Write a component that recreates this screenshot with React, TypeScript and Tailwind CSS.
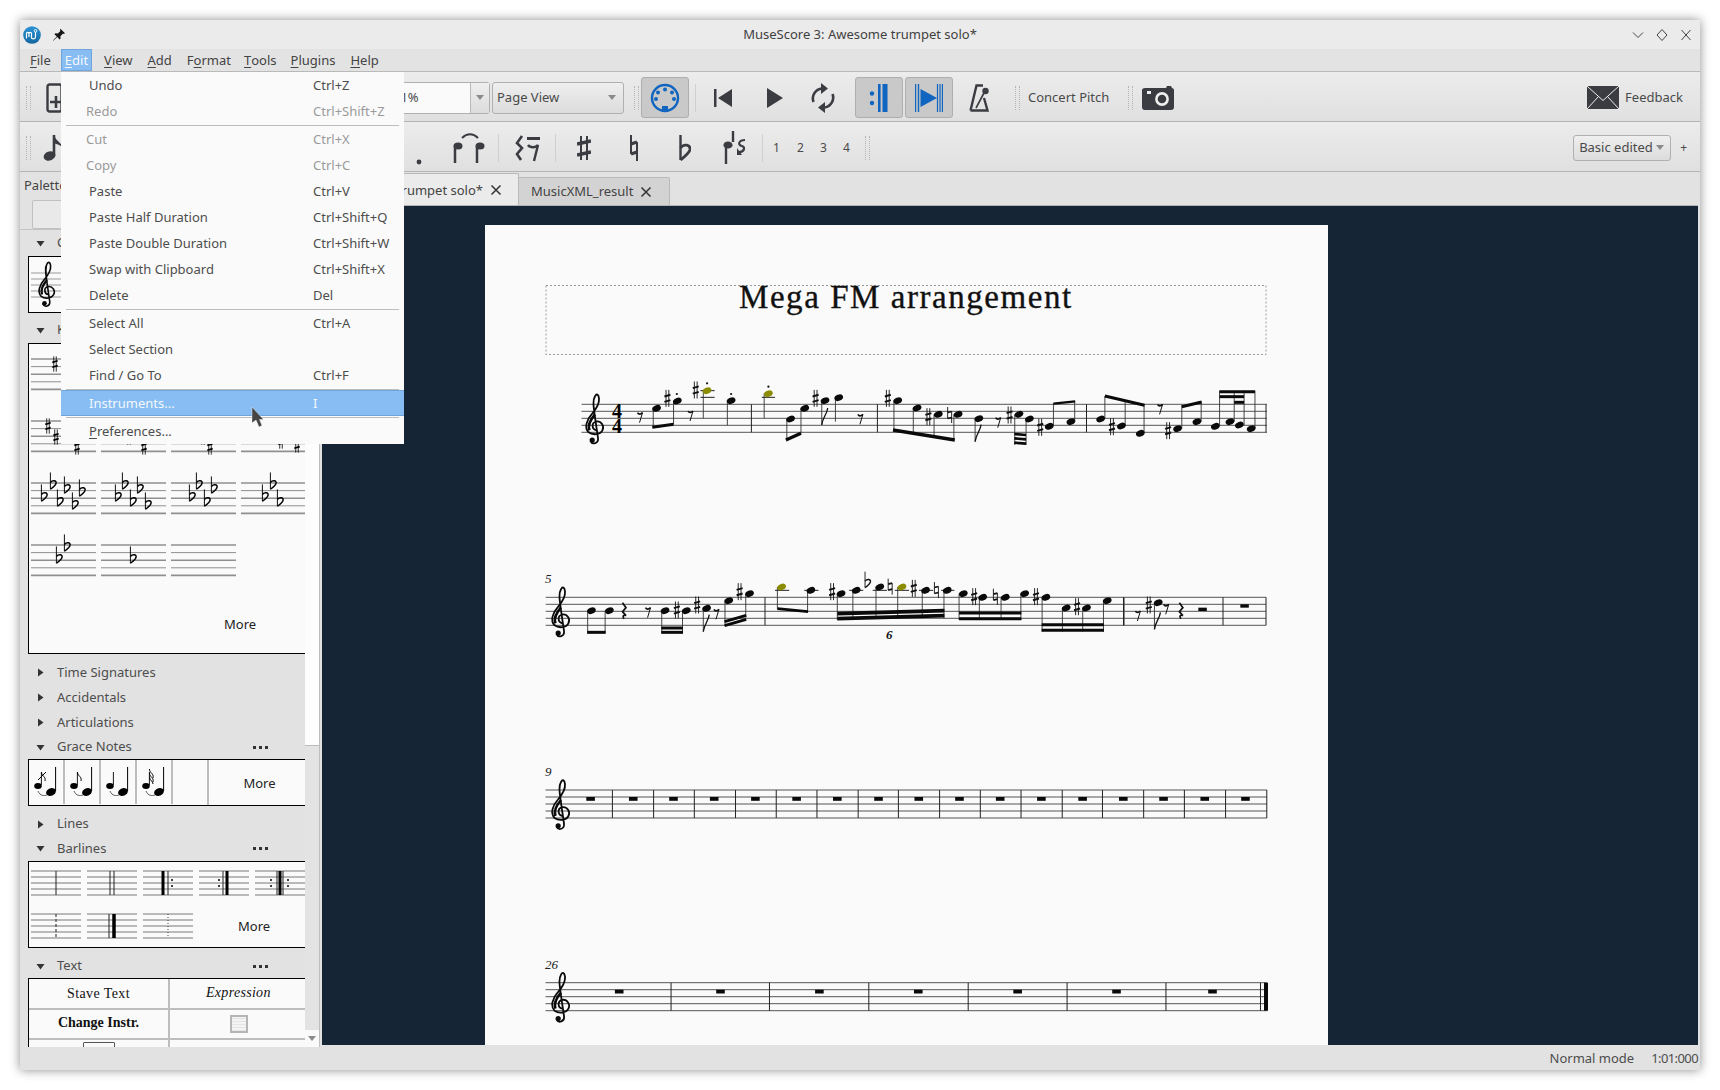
import React from "react";

const INK = "#3a3c42";
const BLUE = "#0f65c0";

const Sharp = ({ x, y, s = 1, c = "#111" }: { x: number; y: number; s?: number; c?: string }) => (
  <g transform={`translate(${x} ${y}) scale(${s})`} stroke={c} fill="none">
    <path d="M-1.4 -8.5V8.5M1.4 -8.5V8.5" strokeWidth="0.9" />
    <path d="M-3 -1.8L3 -3.6M-3 3.6L3 1.8" strokeWidth="1.9" />
  </g>
);
const Natural = ({ x, y, s = 1, c = "#111" }: { x: number; y: number; s?: number; c?: string }) => (
  <g transform={`translate(${x} ${y}) scale(${s})`} stroke={c} fill="none">
    <path d="M-2 -8V3.5M2 -3.5V8" strokeWidth="0.9" />
    <path d="M-2 -2.5L2 -3.5M-2 3.5L2 2.5" strokeWidth="1.8" />
  </g>
);
const Flat = ({ x, y, s = 1, c = "#111" }: { x: number; y: number; s?: number; c?: string }) => (
  <g transform={`translate(${x} ${y}) scale(${s})`} stroke={c} fill="none">
    <path d="M-2 -11V5" strokeWidth="0.9" />
    <path d="M-2 -1.5C0 -4 4 -3.6 3.4 -0.8C3 1.4 0 3.6 -2 5" strokeWidth="1.4" />
  </g>
);
const Clef = ({ x, y, s = 1 }: { x: number; y: number; s?: number }) => (
  <g transform={`translate(${x} ${y}) scale(${s})`} fill="none" stroke="#0a0a0a">
    <path d="M1.5 5C-3.2 4.2 -4 -2.2 1 -3.8C6.4 -4.8 9.6 1 7.4 5C5.2 9.4 -2.2 10.2 -6.4 7C-11 2.5 -8.4 -5.6 -3 -11.5C0.4 -15.5 4.6 -21 4 -27C3.6 -31 1.6 -32 0 -29C-2.5 -25 -1.5 -19 0 -8L3 12.5C3.8 18 -2.6 20 -4.6 15.5" strokeWidth="1.8" />
    <circle cx="-2.8" cy="14.8" r="2.6" fill="#0a0a0a" stroke="none" />
    <path d="M-5.6 5C-7.2 0 -4.4 -6 0 -11" strokeWidth="2.6" />
  </g>
);
const Rest8 = ({ x, y }: { x: number; y: number }) => (
  <g stroke="#111" fill="none">
    <path d={`M${x + 2} ${y - 4}L${x - 1} ${y + 6}`} strokeWidth="1" />
    <path d={`M${x - 3} ${y - 4}C${x - 2} ${y - 2} ${x} ${y - 2} ${x + 2} ${y - 4}`} strokeWidth="1.6" />
  </g>
);
const RestQ = ({ x, y }: { x: number; y: number }) => (
  <path d={`M${x - 1.5} ${y - 8}L${x + 2} ${y - 3}L${x - 1.5} ${y + 1}L${x + 2} ${y + 5}C${x} ${y + 4} ${x - 2} ${y + 5} ${x} ${y + 8}`} stroke="#111" strokeWidth="1.7" fill="none" />
);

type Sys = {
  ox: number; oy: number; sx: number;
  heads: number[][]; olive?: number[][]; stems: number[][]; beams: number[][];
  ledgers?: number[][]; sharps?: number[][]; naturals?: number[][]; flats?: number[][];
  r8?: number[][]; rq?: number[][]; dots?: number[][]; flags?: number[][]; rects?: number[][]; bars: number[];
};

const sys1: Sys = {
  ox: 540, oy: 370, sx: 2.119,
  bars: [448, 715, 1158, 1538],
  heads: [[247,115],[291,93],[405,92],[531,147],[561,115],[604,92],[633,83],[758,92],[799,114],[844,133],[886,133],[930,146],[1015,133],[1037,147],[1079,169],[1125,155],[1188,147],[1232,168],[1272,190],[1351,176],[1392,155],[1431,169],[1462,155],[1482,165],[1507,176]],
  olive: [[354,62],[484,71]],
  stems: [[240,115,172],[283,93,163],[346,62,145],[397,92,166],[475,71,145],[523,147,210],[553,115,190],[597,92,165],[626,83,155],[750,92,180],[791,114,190],[835,133,200],[877,133,208],[922,146,215],[1006,133,225],[1030,147,225],[1088,169,100],[1133,155,95],[1197,147,78],[1240,168,90],[1280,190,105],[1360,176,105],[1401,155,95],[1440,169,62],[1471,155,62],[1492,165,62],[1515,176,62]],
  beams: [[238,172,283,163,9],[521,210,553,190,10],[748,180,879,210,10],[1005,192,1030,195,8],[1005,205,1030,208,8],[1005,218,1030,221,8],[1088,101,1134,94,7],[1197,78,1281,106,9],[1360,110,1402,96,9],[1440,65,1515,65,9],[1440,80,1492,80,9],[1471,97,1492,97,9]],
  ledgers: [[340,370,62],[340,370,82],[470,498,82]],
  sharps: [[270,85],[330,60],[584,85],[737,85],[823,140],[995,135],[1060,172],[1212,170],[1331,182]],
  naturals: [[868,135]],
  r8: [[213,140],[320,135],[680,145],[972,155],[1315,115]],
  dots: [[290,72],[354,40],[405,72],[484,50]],
  flags: [[597,165],[922,215]],
};

const sys2: Sys = {
  ox: 540, oy: 570, sx: 2.119,
  bars: [477, 1238, 1448, 1538],
  heads: [[109,122],[147,122],[265,122],[310,122],[353,115],[400,92],[444,71],[574,61],[638,71],[670,61],[720,51],[817,61],[863,61],[897,71],[938,82],[986,82],[1027,71],[1072,82],[1115,114],[1158,114],[1202,92],[1310,98]],
  olive: [[512,51],[767,51]],
  stems: [[101,122,190],[138,122,190],[258,122,190],[302,122,190],[346,115,185],[392,92,162],[436,71,143],[503,51,117],[567,61,127],[630,71,150],[663,61,148],[712,51,147],[758,51,146],[810,61,145],[856,61,145],[888,71,150],[931,82,150],[977,82,150],[1019,71,150],[1064,82,185],[1107,114,185],[1150,114,185],[1194,92,185],[1302,98,178]],
  beams: [[100,187,139,187,9],[257,174,303,174,9],[257,187,303,187,9],[391,155,437,136,9],[391,167,437,148,9],[503,116,568,125,8],[630,131,857,122,11],[630,146,857,137,11],[888,129,1020,129,9],[888,146,1020,146,9],[1063,164,1195,164,9],[1063,181,1195,181,9]],
  ledgers: [[498,528,61],[560,590,61],[655,685,61],[705,735,61],[752,782,61],[803,833,61],[850,878,61]],
  sharps: [[290,120],[333,105],[423,65],[619,65],[792,55],[920,80],[1051,80],[1138,110],[1290,105]],
  naturals: [[742,50],[840,60],[965,80]],
  flats: [[693,38]],
  r8: [[230,125],[375,130],[1268,135],[1328,115]],
  rq: [[178,122],[1358,122]],
  rects: [[1395,113,1413,123],[1484,103,1502,113]],
  flags: [[346,185],[1302,178]],
};

const System = ({ d }: { d: Sys }) => {
  const X = (z: number) => d.ox + z / d.sx;
  const Y = (z: number) => d.oy + z / 3;
  return (
    <g>
      {d.stems.map((s, i) => <line key={i} x1={X(s[0])} x2={X(s[0])} y1={Y(s[1])} y2={Y(s[2])} stroke="#333" strokeWidth="0.9" />)}
      {d.beams.map((b, i) => <line key={i} x1={X(b[0])} x2={X(b[2])} y1={Y(b[1])} y2={Y(b[3])} stroke="#0a0a0a" strokeWidth={b[4] / 3} />)}
      {(d.ledgers || []).map((l, i) => <line key={i} x1={X(l[0])} x2={X(l[1])} y1={Y(l[2])} y2={Y(l[2])} stroke="#222" strokeWidth="1" />)}
      {d.heads.map((h, i) => <ellipse key={i} cx={X(h[0])} cy={Y(h[1])} rx="4.5" ry="3.1" fill="#0a0a0a" transform={`rotate(-22 ${X(h[0])} ${Y(h[1])})`} />)}
      {(d.olive || []).map((h, i) => <ellipse key={i} cx={X(h[0])} cy={Y(h[1])} rx="4.5" ry="3.1" fill="#8c8c00" transform={`rotate(-22 ${X(h[0])} ${Y(h[1])})`} />)}
      {(d.sharps || []).map((a, i) => <Sharp key={i} x={X(a[0])} y={Y(a[1])} />)}
      {(d.naturals || []).map((a, i) => <Natural key={i} x={X(a[0])} y={Y(a[1])} />)}
      {(d.flats || []).map((a, i) => <Flat key={i} x={X(a[0])} y={Y(a[1])} />)}
      {(d.r8 || []).map((a, i) => <Rest8 key={i} x={X(a[0])} y={Y(a[1])} />)}
      {(d.rq || []).map((a, i) => <RestQ key={i} x={X(a[0])} y={Y(a[1])} />)}
      {(d.dots || []).map((a, i) => <circle key={i} cx={X(a[0])} cy={Y(a[1])} r="1.1" fill="#111" />)}
      {(d.flags || []).map((a, i) => <path key={i} d={`M${X(a[0])} ${Y(a[1])}C${X(a[0]) + 1} ${Y(a[1]) - 8} ${X(a[0]) + 5} ${Y(a[1]) - 10} ${X(a[0]) + 6} ${Y(a[1]) - 17}`} stroke="#111" strokeWidth="1.3" fill="none" />)}
      {(d.rects || []).map((r, i) => <rect key={i} x={X(r[0])} y={Y(r[1])} width={(r[2] - r[0]) / d.sx} height={(r[3] - r[1]) / 3} fill="#0a0a0a" />)}
    </g>
  );
};

const Staff = ({ x1, x2, y }: { x1: number; x2: number; y: number }) => (
  <g stroke="#555" strokeWidth="1">
    {[0, 7, 14, 21, 28].map((o) => <line key={o} x1={x1} x2={x2} y1={y + o} y2={y + o} />)}
  </g>
);
const Bars = ({ xs, y }: { xs: number[]; y: number }) => (
  <g stroke="#222" strokeWidth="1">
    {xs.map((x) => <line key={x} x1={x} x2={x} y1={y} y2={y + 28} />)}
  </g>
);

const z3 = (z: number) => 530 + z / 2.063;
const bars3 = [170,255,339,424,508,592,677,760,845,929,1013,1098,1181,1266,1350,1435,1520];
const rests3 = [125,213,296,380,465,550,634,719,802,886,970,1055,1140,1224,1307,1392,1476];
const bars4 = [291,494,699,904,1108,1312,1507];
const rests4 = [184,393,597,801,1006,1210,1408];

const Score = () => (
  <svg viewBox="485 225 843 820" width="843" height="820" className="block">
    <rect x="546" y="285.5" width="720" height="69" fill="none" stroke="#9a9a9a" strokeWidth="1" strokeDasharray="2 2" />
    <text x="739" y="308" className="font-['Liberation_Serif']" fontSize="33" letterSpacing="1.55" fill="#111" stroke="#111" strokeWidth="0.35">Mega FM arrangement</text>

    <Staff x1={581.5} x2={1267} y={404.3} />
    <Clef x={595} y={425.3} />
    <text x="612" y="418" className="font-['Liberation_Serif'] font-bold" fontSize="20" fill="#000">4</text>
    <text x="612" y="432.5" className="font-['Liberation_Serif'] font-bold" fontSize="20" fill="#000">4</text>
    <Bars xs={[751.4, 877.4, 1086.5, 1266]} y={404.3} />
    <System d={sys1} />

    <text x="545" y="583" className="font-['Liberation_Serif'] italic" fontSize="13" fill="#222">5</text>
    <Staff x1={545.7} x2={1266} y={597.3} />
    <Clef x={561} y={618.3} />
    <Bars xs={[765, 1124, 1123.5, 1223, 1266]} y={597.3} />
    <System d={sys2} />
    <text x="886" y="639" className="font-['Liberation_Serif'] italic font-bold" fontSize="13" fill="#111">6</text>

    <text x="545" y="776" className="font-['Liberation_Serif'] italic" fontSize="13" fill="#222">9</text>
    <Staff x1={545.5} x2={1267} y={790} />
    <Clef x={561} y={811} />
    <Bars xs={bars3.map(z3)} y={790} />
    {rests3.map((r) => <rect key={r} x={z3(r) - 4.3} y={797} width="8.6" height="3.8" fill="#0a0a0a" />)}

    <text x="545" y="969" className="font-['Liberation_Serif'] italic" fontSize="13" fill="#222">26</text>
    <Staff x1={545.5} x2={1267} y={982.7} />
    <Clef x={561} y={1003.7} />
    <Bars xs={bars4.map(z3)} y={982.7} />
    <rect x="1264" y="982.7" width="4" height="28" fill="#0a0a0a" />
    {rests4.map((r) => <rect key={r} x={z3(r) - 4.3} y={989.7} width="8.6" height="3.8" fill="#0a0a0a" />)}
  </svg>
);

const Grip = ({ cls }: { cls: string }) => (
  <div className={`w-[5px] h-[24px] shrink-0 border-x border-dotted border-[#b5b5b5] ${cls}`} />
);
const Sep = ({ cls }: { cls: string }) => <div className={`w-px h-[28px] shrink-0 bg-[#cfcfcf] ${cls}`} />;
const U = ({ children }: { children: React.ReactNode }) => <span className="underline underline-offset-2">{children}</span>;

const TriDown = () => <svg width="9" height="7" viewBox="0 0 9 7" className="shrink-0"><path d="M0.5 1H8.5L4.5 6.5Z" fill="#333" /></svg>;
const TriRight = () => <svg width="9" height="9" viewBox="0 0 9 9" className="shrink-0"><path d="M2 0.5V8.5L7.5 4.5Z" fill="#333" /></svg>;
const ComboArrow = () => <svg width="8" height="5" viewBox="0 0 8 5"><path d="M0 0H8L4 5Z" fill="#8a8a8a" /></svg>;

const TitleBar = () => (
  <div className="h-[29px] shrink-0 bg-[#ebebeb] flex items-center relative">
    <svg width="18" height="18" viewBox="0 0 18 18" className="ml-[3px]">
      <defs>
        <linearGradient id="lg" x1="0" y1="0" x2="0" y2="1">
          <stop offset="0" stopColor="#2c93d6" />
          <stop offset="1" stopColor="#15679f" />
        </linearGradient>
      </defs>
      <circle cx="9" cy="9" r="8.8" fill="url(#lg)" />
      <path d="M3.5 12.5V7.5C3.5 6 6 6 6 7.5V11M6 7.5C6 6 8.5 6 8.5 7.5V11.5C8.5 13.5 12.5 13.5 12.5 11V6" stroke="#fff" strokeWidth="1.2" fill="none" />
      <circle cx="12.5" cy="4.8" r="1.3" fill="none" stroke="#fff" strokeWidth="0.9" />
    </svg>
    <svg width="14" height="14" viewBox="0 0 14 14" className="ml-[11px]">
      <path d="M8.5 0.8L13 5.3L11.8 6L11 5.6L8.4 8.2L8.6 10.6L7.6 11.5L5.2 9L1.4 12.8L1 12.4L4.8 8.6L2.4 6.2L3.4 5.3L5.8 5.5L8.4 2.9L8 2Z" fill="#161616" />
    </svg>
    <div className="flex-1 text-center text-[13px] text-[#3f3f3f] pl-[22px]">MuseScore 3: Awesome trumpet solo*</div>
    <div className="flex items-center">
      <svg width="12" height="12" viewBox="0 0 12 12" className="mr-[12px]"><path d="M1 3.5L6 8.5L11 3.5" stroke="#444" fill="none" /></svg>
      <svg width="12" height="12" viewBox="0 0 12 12" className="mr-[12px]"><path d="M6 0.5L11 6L6 11.5L1 6Z" stroke="#444" fill="none" /></svg>
      <svg width="12" height="12" viewBox="0 0 12 12" className="mr-[8px]"><path d="M1.5 1L10.5 11M10.5 1L1.5 11" stroke="#444" fill="none" /></svg>
    </div>
  </div>
);

const menus: [string, React.ReactNode][] = [
  ["ml-[10px]", <><U>F</U>ile</>],
  ["ml-[10px] px-[3px] bg-[#87bdf3] border border-[#6fa5db] text-[#f4f8fc]", <><U>E</U>dit</>],
  ["ml-[12px]", <><U>V</U>iew</>],
  ["ml-[15px]", <><U>A</U>dd</>],
  ["ml-[15px]", <>F<U>o</U>rmat</>],
  ["ml-[13px]", <><U>T</U>ools</>],
  ["ml-[14px]", <><U>P</U>lugins</>],
  ["ml-[15px]", <><U>H</U>elp</>],
];
const MenuBar = () => (
  <div className="h-[23px] shrink-0 bg-[#e3e3e3] border-b border-[#b9b9b9] flex items-stretch text-[13px] text-[#444]">
    {menus.map(([c, t], i) => <div key={i} className={`flex items-center pt-[2px] ${c}`}>{t}</div>)}
  </div>
);

const Toggle = ({ cls, children }: { cls: string; children: React.ReactNode }) => (
  <div className={`w-[48px] h-[41px] shrink-0 rounded-[3px] bg-[#c9c9c9] border border-[#aeaeae] flex items-center justify-center ${cls}`}>{children}</div>
);

const Toolbar1 = () => (
  <div className="h-[50px] shrink-0 pt-[2px] bg-gradient-to-b from-[#ececec] to-[#e0e0e0] border-b border-[#b4b4b4] flex items-center text-[13px] text-[#4a4a4a]">
    <Grip cls="ml-[6px]" />
    <svg width="18" height="30" viewBox="0 0 18 30" className="ml-[15px] shrink-0">
      <rect x="1.5" y="1.5" width="14" height="27" rx="2" fill="none" stroke={INK} strokeWidth="2.4" />
      <path d="M10 13V25M4 19H16" stroke={INK} strokeWidth="2.6" />
    </svg>
    <div className="ml-[266px] w-[160px] h-[32px] shrink-0 flex rounded-[3px] border border-[#b0b0b0] bg-[#fafafa]">
      <div className="flex-1 pl-[62px] flex items-center">71%</div>
      <div className="w-[19px] border-l border-[#b9b9b9] bg-gradient-to-b from-[#efefef] to-[#dcdcdc] flex items-center justify-center"><ComboArrow /></div>
    </div>
    <div className="ml-[2px] w-[132px] h-[32px] shrink-0 flex items-center justify-between pl-[4px] pr-[7px] rounded-[3px] border border-[#b0b0b0] bg-gradient-to-b from-[#efefef] to-[#dcdcdc]">
      <span>Page View</span><ComboArrow />
    </div>
    <Grip cls="ml-[10px]" />
    <Toggle cls="ml-[2px]">
      <svg width="30" height="30" viewBox="0 0 30 30">
        <circle cx="15" cy="15" r="13" fill="none" stroke={BLUE} strokeWidth="2.4" />
        <rect x="12" y="23" width="6" height="5" fill={BLUE} />
        <circle cx="15" cy="6.5" r="2" fill={BLUE} /><circle cx="8" cy="9.5" r="2" fill={BLUE} /><circle cx="22" cy="9.5" r="2" fill={BLUE} /><circle cx="6" cy="16" r="2" fill={BLUE} /><circle cx="24" cy="16" r="2" fill={BLUE} />
      </svg>
    </Toggle>
    <Sep cls="ml-[6px]" />
    <svg width="18" height="18" viewBox="0 0 18 18" className="ml-[18px] shrink-0"><path d="M0 0H2.5V18H0ZM18 0V18L4 9Z" fill={INK} /></svg>
    <svg width="16" height="20" viewBox="0 0 16 20" className="ml-[35px] shrink-0"><path d="M0 0L16 10L0 20Z" fill={INK} /></svg>
    <svg width="24" height="30" viewBox="-12 -15 24 30" className="ml-[28px] shrink-0">
      <path d="M-9.5 4A10 10 0 0 1 -1 -9.5M9.5 -4A10 10 0 0 1 1 9.5" fill="none" stroke={INK} strokeWidth="2.6" />
      <path d="M-2 -15L5 -9.5L-2 -4ZM2 15L-5 9.5L2 4Z" fill={INK} />
    </svg>
    <Toggle cls="ml-[20px]">
      <svg width="20" height="28" viewBox="0 0 20 28">
        <circle cx="3" cy="9.5" r="2.2" fill={BLUE} /><circle cx="3" cy="19" r="2.2" fill={BLUE} />
        <rect x="9" y="0" width="2.6" height="28" fill={BLUE} /><rect x="13.5" y="0" width="5" height="28" fill={BLUE} />
      </svg>
    </Toggle>
    <Toggle cls="ml-[2px]">
      <svg width="28" height="28" viewBox="0 0 28 28">
        <path d="M0.5 0V28M3.5 0V28" stroke={BLUE} strokeWidth="1.4" />
        <path d="M5.5 5V23L22 14Z" fill={BLUE} />
        <path d="M22.5 0V28M25 0V28M27.4 0V28" stroke={BLUE} strokeWidth="1.2" />
      </svg>
    </Toggle>
    <svg width="21" height="28" viewBox="0 0 21 28" className="ml-[16px] shrink-0">
      <path d="M1.5 26.5L7.5 1.5H14M15 14L18.5 26.5H1.5" fill="none" stroke={INK} strokeWidth="2.4" />
      <path d="M7 24L15.5 8" stroke={INK} strokeWidth="1.6" />
      <circle cx="16.5" cy="7" r="3.2" fill={INK} />
    </svg>
    <Grip cls="ml-[25px]" />
    <span className="ml-[8px] w-[81px] shrink-0 whitespace-nowrap">Concert Pitch</span>
    <Grip cls="ml-[19px]" />
    <svg width="32" height="25" viewBox="0 0 32 25" className="ml-[9px] shrink-0">
      <path d="M3 3H24L25 1H29L30 3C31 3 32 4 32 5V22C32 24 31 25 29 25H3C1 25 0 24 0 22V5C0 4 1 3 3 3Z" fill={INK} />
      <rect x="5" y="6" width="4" height="3" fill="#eee" />
      <circle cx="20" cy="14" r="5.6" fill="none" stroke="#eee" strokeWidth="2.6" />
    </svg>
    <svg width="32" height="23" viewBox="0 0 32 23" className="ml-auto shrink-0">
      <rect width="32" height="23" fill={INK} />
      <path d="M0 0L16 14.5L32 0M0 23L11.5 10.5M32 23L20.5 10.5" stroke="#eee" strokeWidth="1" fill="none" />
    </svg>
    <span className="ml-[6px] mr-[17px]">Feedback</span>
  </div>
);

const Toolbar2 = () => (
  <div className="h-[50px] shrink-0 pt-[2px] bg-gradient-to-b from-[#ececec] to-[#e0e0e0] border-b border-[#b4b4b4] flex items-center text-[12px] text-[#4a4a4a]">
    <Grip cls="ml-[6px]" />
    <svg width="24" height="28" viewBox="0 0 24 28" className="ml-[12px] shrink-0">
      <ellipse cx="6.5" cy="22" rx="6" ry="4.5" fill={INK} transform="rotate(-20 6.5 22)" />
      <path d="M11 22V1" stroke={INK} strokeWidth="2.6" />
      <path d="M11 1C13 8 20 8 20 17C20 11 15 11 11 9Z" fill={INK} />
    </svg>
    <svg width="6" height="6" viewBox="0 0 6 6" className="ml-[349px] mt-[28px] shrink-0"><circle cx="3" cy="3" r="2.4" fill={INK} /></svg>
    <svg width="33" height="32" viewBox="0 0 33 32" className="ml-[31px] shrink-0">
      <path d="M9 6C14 1 20 1 25 6" fill="none" stroke={INK} strokeWidth="2" />
      <ellipse cx="5" cy="14" rx="4.5" ry="3.6" fill={INK} /><path d="M2 14V31" stroke={INK} strokeWidth="2.5" />
      <ellipse cx="27" cy="14" rx="4.5" ry="3.6" fill={INK} /><path d="M24 14V31" stroke={INK} strokeWidth="2.5" />
    </svg>
    <Sep cls="ml-[12px]" />
    <svg width="27" height="28" viewBox="0 0 27 28" className="ml-[15px] shrink-0">
      <path d="M8 2L3 9L8 14L3 20L7 26" fill="none" stroke={INK} strokeWidth="2.6" />
      <rect x="13" y="3" width="13" height="3" fill={INK} />
      <path d="M14 11C16 14 22 14 24 11L20 27" fill="none" stroke={INK} strokeWidth="2.4" />
    </svg>
    <Sep cls="ml-[14px]" />
    <svg width="14" height="26" viewBox="0 0 14 26" className="ml-[21px] shrink-0">
      <path d="M4 1V25M10 1V25" stroke={INK} strokeWidth="2" /><path d="M0 9L14 6M0 20L14 17" stroke={INK} strokeWidth="3.6" />
    </svg>
    <svg width="8" height="26" viewBox="0 0 8 26" className="ml-[39px] shrink-0">
      <path d="M1 0V19M7 7V26" stroke={INK} strokeWidth="2" /><path d="M1 9L7 7M1 19L7 17" stroke={INK} strokeWidth="3.4" />
    </svg>
    <svg width="12" height="26" viewBox="0 0 12 26" className="ml-[41px] shrink-0">
      <path d="M1.5 0V25" stroke={INK} strokeWidth="2.4" /><path d="M1.5 13C5 8 11.5 10 11 14.5C10.5 18 5 22 1.5 25" fill="none" stroke={INK} strokeWidth="2.8" />
    </svg>
    <svg width="26" height="33" viewBox="0 0 26 33" className="ml-[32px] shrink-0">
      <path d="M3 15V33" stroke={INK} strokeWidth="2.4" /><ellipse cx="5" cy="14" rx="4.6" ry="3.6" fill={INK} /><path d="M10 0V11" stroke={INK} strokeWidth="2.4" />
      <path d="M22 9C16 9 14 14 19 15C22 16 22 21 16 21" fill="none" stroke={INK} strokeWidth="2.2" /><path d="M14 17L19 24L14 24Z" fill={INK} />
    </svg>
    <Sep cls="ml-[13px]" />
    <span className="ml-[10px] w-[24px] shrink-0">1</span>
    <span className="w-[23px] shrink-0">2</span>
    <span className="w-[23px] shrink-0">3</span>
    <span className="w-[22px] shrink-0">4</span>
    <Grip cls="" />
    <div className="ml-auto w-[98px] h-[26px] shrink-0 flex items-center justify-between px-[5px] pr-[6px] rounded-[3px] border border-[#b0b0b0] bg-gradient-to-b from-[#efefef] to-[#dcdcdc] text-[13px]">
      <span className="whitespace-nowrap">Basic edited</span><ComboArrow />
    </div>
    <span className="ml-[9px] mr-[13px]">+</span>
  </div>
);

const MiniStaff = ({ w, sp }: { w: number; sp: number }) => (
  <g>
    {[0, 1, 2, 3, 4].map((i) => <line key={i} x1="0" x2={w} y1={i * sp} y2={i * sp} stroke="#8f8f8f" strokeWidth={i % 2 === 0 ? 1.6 : 1} />)}
  </g>
);

const keyFlats: number[][][] = [
  [[12.5,13],[21.5,1],[28.5,18],[35.5,5],[43.5,21],[50.5,8]],
  [[16.5,13],[23.5,1],[31.5,18],[38.5,5],[46.5,21]],
  [[20.5,13],[27.5,1],[35.5,18],[42.5,5]],
  [[23.5,13],[31.5,1],[38.5,18]],
  [[27.5,13],[35.5,1]],
  [[31.5,13]],
  [],
];
const keySharps: number[][][] = [
  [[17,5],[25,16],[33,-3],[41,9],[46,26]],
  [[20,5],[28,16],[36,-3],[43,26]],
  [[24,5],[32,16],[39,26]],
  [[40,20],[48,12],[56,24]],
];
const keyTop: number[][][] = [
  [[60,6]], [[60,6]], [[60,6]], [[60,6]],
];

const KeyCell = ({ sharps, flats }: { sharps?: number[][]; flats?: number[][] }) => (
  <svg width="65" height="62" viewBox="0 -15 65 62" className="block">
    <MiniStaff w={65} sp={7.6} />
    {(sharps || []).map((s, i) => <Sharp key={i} x={s[0]} y={s[1]} s={0.9} c="#000" />)}
    {(flats || []).map((s, i) => <Flat key={i} x={s[0]} y={s[1]} s={1.05} c="#000" />)}
  </svg>
);

const GraceCell = ({ v }: { v: number }) => (
  <svg width="34" height="44" viewBox="0 0 34 44" className="block shrink-0 border-r-2 border-[#bdbdbd] box-content">
    <ellipse cx="9" cy="26" rx="3.8" ry="3" fill="#000" />
    <path d="M12.4 25V12" stroke="#000" strokeWidth="0.9" />
    {v === 0 && <path d="M12.4 12C13 17 17 16 16 21M9 20L17 12" stroke="#000" fill="none" />}
    {v === 1 && <path d="M12.4 12C13 17 17 16 16 21" stroke="#000" fill="none" />}
    {v === 3 && <path d="M12.4 9C13 14 17 13 16 18M12.4 13C13 18 17 17 16 22M12.4 17C13 21 16 21 16 24" stroke="#000" fill="none" />}
    <ellipse cx="22" cy="32" rx="5" ry="3.8" fill="#000" transform="rotate(-20 22 32)" />
    <path d="M26.6 31V7" stroke="#000" strokeWidth="1" />
    <path d="M9 31C11 36 15 36 18 35" stroke="#333" fill="none" strokeWidth="0.8" />
  </svg>
);

const BarCell = ({ children }: { children?: React.ReactNode }) => (
  <svg width="50" height="43" viewBox="0 -9 50 43" className="block">
    {[0, 1, 2, 3, 4].map((i) => <line key={i} x1="0" x2="50" y1={i * 6} y2={i * 6} stroke="#a3a3a3" strokeWidth="1.5" />)}
    {children}
  </svg>
);

const PalHead = ({ label, open, cls, more }: { label: string; open?: boolean; cls: string; more?: boolean }) => (
  <div className={`flex items-center ${cls}`}>
    <div className="w-[9px] ml-[8px] flex justify-center">{open ? <TriDown /> : <TriRight />}</div>
    <span className="ml-[12px] text-[13px] text-[#4d4d4d]">{label}</span>
    {more && <div className="ml-auto mr-[37px] flex gap-[3px]">{[0, 1, 2].map((i) => <div key={i} className="w-[3px] h-[3px] bg-[#333]" />)}</div>}
  </div>
);

const Palette = () => (
  <div className="w-[302px] shrink-0 flex flex-col h-full overflow-hidden">
    <div className="h-[28px] shrink-0 flex items-center pl-[4px] text-[13px] text-[#444]">Palettes</div>
    <div className="h-[30px] shrink-0 border-b border-[#c4c4c4] pl-[12px]">
      <div className="w-[120px] h-[29px] bg-[#e9e9e9] border border-[#c0c0c0] rounded-[2px]" />
    </div>
    <div className="flex-1 min-h-0 flex overflow-hidden">
      <div className="w-[285px] shrink-0 pl-[8px] overflow-hidden">
        <PalHead label="Clefs" open cls="h-[26px]" />
        <div className="w-[290px] h-[57px] bg-[#fafafa] border border-black">
          <svg width="40" height="55" viewBox="0 0 40 55" className="block">
            {[16, 22, 28, 34, 40].map((y) => <line key={y} x1="2" x2="40" y1={y} y2={y} stroke="#9a9a9a" strokeWidth="1.2" />)}
            <Clef x={18} y={33} s={0.9} />
          </svg>
        </div>
        <PalHead label="Key Signatures" open cls="h-[26px] mt-[4px]" />
        <div className="w-[290px] h-[311px] bg-[#fafafa] border border-black flex flex-col">
          <div className="grid grid-cols-[70px_70px_70px_70px] pl-[2px]">
            {keyTop.map((k, i) => <KeyCell key={i} sharps={k.concat([[24, 5]])} />)}
            {keySharps.map((k, i) => <KeyCell key={i} sharps={k} />)}
            {keyFlats.slice(0, 4).map((k, i) => <KeyCell key={i} flats={k} />)}
            {keyFlats.slice(4, 7).map((k, i) => <KeyCell key={i} flats={k} />)}
          </div>
          <div className="flex-1 flex items-center pl-[195px] pt-[4px] text-[13px] text-[#222]">More</div>
        </div>
        <PalHead label="Time Signatures" cls="h-[25px] mt-[6px]" />
        <PalHead label="Accidentals" cls="h-[25px]" />
        <PalHead label="Articulations" cls="h-[25px]" />
        <PalHead label="Grace Notes" open more cls="h-[24px]" />
        <div className="w-[290px] h-[47px] bg-[#fafafa] border border-black flex">
          {[0, 1, 2, 3].map((v) => <GraceCell key={v} v={v} />)}
          <div className="w-[36px] shrink-0 border-r-2 border-[#bdbdbd]" />
          <div className="w-[101px] text-center self-center pt-[2px] text-[13px] text-[#222]">More</div>
        </div>
        <PalHead label="Lines" cls="h-[24px] mt-[6px]" />
        <PalHead label="Barlines" open more cls="h-[25px]" />
        <div className="w-[290px] h-[87px] bg-[#fafafa] border border-black pl-[2px] grid grid-cols-[56px_56px_56px_56px_56px]">
          <BarCell><path d="M25 0V24" stroke="#222" /></BarCell>
          <BarCell><path d="M23 0V24M27 0V24" stroke="#222" /></BarCell>
          <BarCell><path d="M20 0V24" stroke="#000" strokeWidth="3" /><path d="M25 0V24" stroke="#222" /><circle cx="29" cy="9" r="1" fill="#000" /><circle cx="29" cy="15" r="1" fill="#000" /></BarCell>
          <BarCell><path d="M28 0V24" stroke="#000" strokeWidth="3" /><path d="M24 0V24" stroke="#222" /><circle cx="20" cy="9" r="1" fill="#000" /><circle cx="20" cy="15" r="1" fill="#000" /></BarCell>
          <BarCell><path d="M25 0V24" stroke="#000" strokeWidth="3" /><path d="M22 0V24M28 0V24" stroke="#222" /><circle cx="16" cy="9" r="1" fill="#000" /><circle cx="16" cy="15" r="1" fill="#000" /><circle cx="33" cy="9" r="1" fill="#000" /><circle cx="33" cy="15" r="1" fill="#000" /></BarCell>
          <BarCell><path d="M25 0V24" stroke="#222" strokeDasharray="3 2" /></BarCell>
          <BarCell><path d="M22 0V24" stroke="#222" /><path d="M27 0V24" stroke="#000" strokeWidth="3.5" /></BarCell>
          <BarCell><path d="M25 0V24" stroke="#444" strokeDasharray="1 2" /></BarCell>
          <div className="col-span-2 flex items-center pl-[39px] text-[13px] text-[#222]">More</div>
        </div>
        <PalHead label="Text" open more cls="h-[24px] mt-[6px]" />
        <div className="w-[290px] bg-[#fafafa] border border-black text-[14px] text-[#111] font-['Liberation_Serif'] grid grid-cols-[141px_149px]">
          <div className="h-[31px] flex items-center justify-center border-r-2 border-b-2 border-[#bdbdbd] tracking-[0.4px]">Stave Text</div>
          <div className="h-[31px] flex items-center justify-start pl-[36px] border-b-2 border-[#bdbdbd] italic tracking-[0.3px] pb-[2px]">Expression</div>
          <div className="h-[30px] flex items-center justify-center pb-[3px] border-r-2 border-b-2 border-[#bdbdbd] font-bold">Change Instr.</div>
          <div className="h-[30px] flex items-center justify-start pl-[60px] border-b-2 border-[#bdbdbd]">
            <div className="w-[18px] h-[18px] border-2 border-[#b5b5b5] bg-[repeating-linear-gradient(0deg,#e4e4e4,#e4e4e4_1px,#f4f4f4_1px,#f4f4f4_3px)]" />
          </div>
          <div className="h-[20px] flex justify-center border-r-2 border-[#bdbdbd] pt-[2px]"><div className="w-[32px] h-[20px] border border-[#555] rounded-[1px]" /></div>
          <div className="h-[20px]" />
        </div>
      </div>
      <div className="w-[15px] shrink-0 flex flex-col border-r border-[#bdbdbd]">
        <div className="h-[515px] shrink-0 bg-[#fdfdfd]" />
        <div className="h-[285px] shrink-0 bg-[#e3e3e3] border-t border-[#bdbdbd]" />
        <div className="flex-1 bg-[#fafafa] flex items-center justify-center"><ComboArrow /></div>
      </div>
    </div>
  </div>
);

const TabX = () => <svg width="12" height="12" viewBox="0 0 12 12" className="shrink-0"><path d="M1.5 1.5L10.5 10.5M10.5 1.5L1.5 10.5" stroke="#333" strokeWidth="1.5" /></svg>;

const Main = () => (
  <div className="flex-1 min-w-0 flex flex-col pr-[2px] pb-[2px]">
    <div className="h-[34px] shrink-0 border-b border-[#b4b4b4] flex items-end text-[13px] text-[#444]">
      <div className="w-[197px] h-[32px] shrink-0 bg-[#ebebeb] border-t border-r border-[#b9b9b9] rounded-tr-[2px] flex items-center pl-[12px]">
        <span className="w-[156px] whitespace-nowrap pt-[2px]">Awesome trumpet solo*</span><TabX />
      </div>
      <div className="w-[151px] h-[28px] shrink-0 bg-[#d3d3d3] border-t border-r border-[#b9b9b9] rounded-tr-[2px] flex items-center pl-[12px]">
        <span className="w-[109px] whitespace-nowrap">MusicXML_result</span><TabX />
      </div>
    </div>
    <div className="flex-1 min-h-0 bg-[#152536] pl-[163px] pt-[19px] overflow-hidden">
      <div className="w-[843px] h-[820px] bg-[#fafafa]"><Score /></div>
    </div>
  </div>
);

type Item = { t?: string; s?: string; d?: boolean; u?: React.ReactNode; hl?: boolean };
const items: (Item | null)[] = [
  { t: "Undo", s: "Ctrl+Z" }, { t: "Redo", s: "Ctrl+Shift+Z", d: true }, null,
  { t: "Cut", s: "Ctrl+X", d: true }, { t: "Copy", s: "Ctrl+C", d: true }, { t: "Paste", s: "Ctrl+V" },
  { t: "Paste Half Duration", s: "Ctrl+Shift+Q" }, { t: "Paste Double Duration", s: "Ctrl+Shift+W" },
  { t: "Swap with Clipboard", s: "Ctrl+Shift+X" }, { t: "Delete", s: "Del" }, null,
  { t: "Select All", s: "Ctrl+A" }, { t: "Select Section" }, { t: "Find / Go To", s: "Ctrl+F" }, null,
  { t: "Instruments...", s: "I", hl: true }, null,
  { u: <><U>P</U>references...</> },
];

const Menu = () => (
  <div className="absolute left-[41px] top-[52px] w-[343px] h-[372px] bg-[#fafafa] text-[13px] text-[#4d4d4d]">
    {items.map((it, i) =>
      it === null ? (
        <div key={i} className="h-[2px] flex items-center pl-[5px] pr-[5px]"><div className="h-px w-full bg-[#bdbdbd]" /></div>
      ) : (
        <div key={i} className={`h-[26px] flex items-center pt-[2px] ${it.hl ? "bg-[#87bdf3] border-y border-[#6fa5db] text-[#f4f8fc]" : ""} ${it.d ? "text-[#9a9a9a]" : ""}`}>
          <span className={`${it.d ? "ml-[25px] w-[227px]" : "ml-[28px] w-[224px]"} whitespace-nowrap`}>{it.t || it.u}</span>
          <span className="whitespace-nowrap">{it.s}</span>
        </div>
      )
    )}
  </div>
);

const Cursor = () => (
  <svg width="13" height="22" viewBox="0 0 13 22" className="absolute left-[231px] top-[386px]">
    <path d="M1 1V17L5 14L8 21L11 19.5L8.5 13.5H12.5Z" fill="#454545" stroke="#fff" strokeWidth="0.4" />
  </svg>
);

export default function App() {
  return (
    <div className="w-[1720px] h-[1090px] bg-white p-[20px] overflow-hidden font-['Noto_Sans',sans-serif]">
      <div className="relative w-[1680px] h-[1050px] bg-[#e2e2e2] flex flex-col shadow-[0_0_10px_rgba(0,0,0,0.45)]">
        <TitleBar />
        <MenuBar />
        <Toolbar1 />
        <Toolbar2 />
        <div className="h-[875px] shrink-0 flex">
          <Palette />
          <Main />
        </div>
        <div className="flex-1 flex items-center justify-end pr-[2px] text-[13px] text-[#4d4d4d]">
          <span>Normal mode</span>
          <span className="ml-[17px] tracking-[-0.6px]">1:01:000</span>
        </div>
        <Menu />
        <Cursor />
      </div>
    </div>
  );
}
